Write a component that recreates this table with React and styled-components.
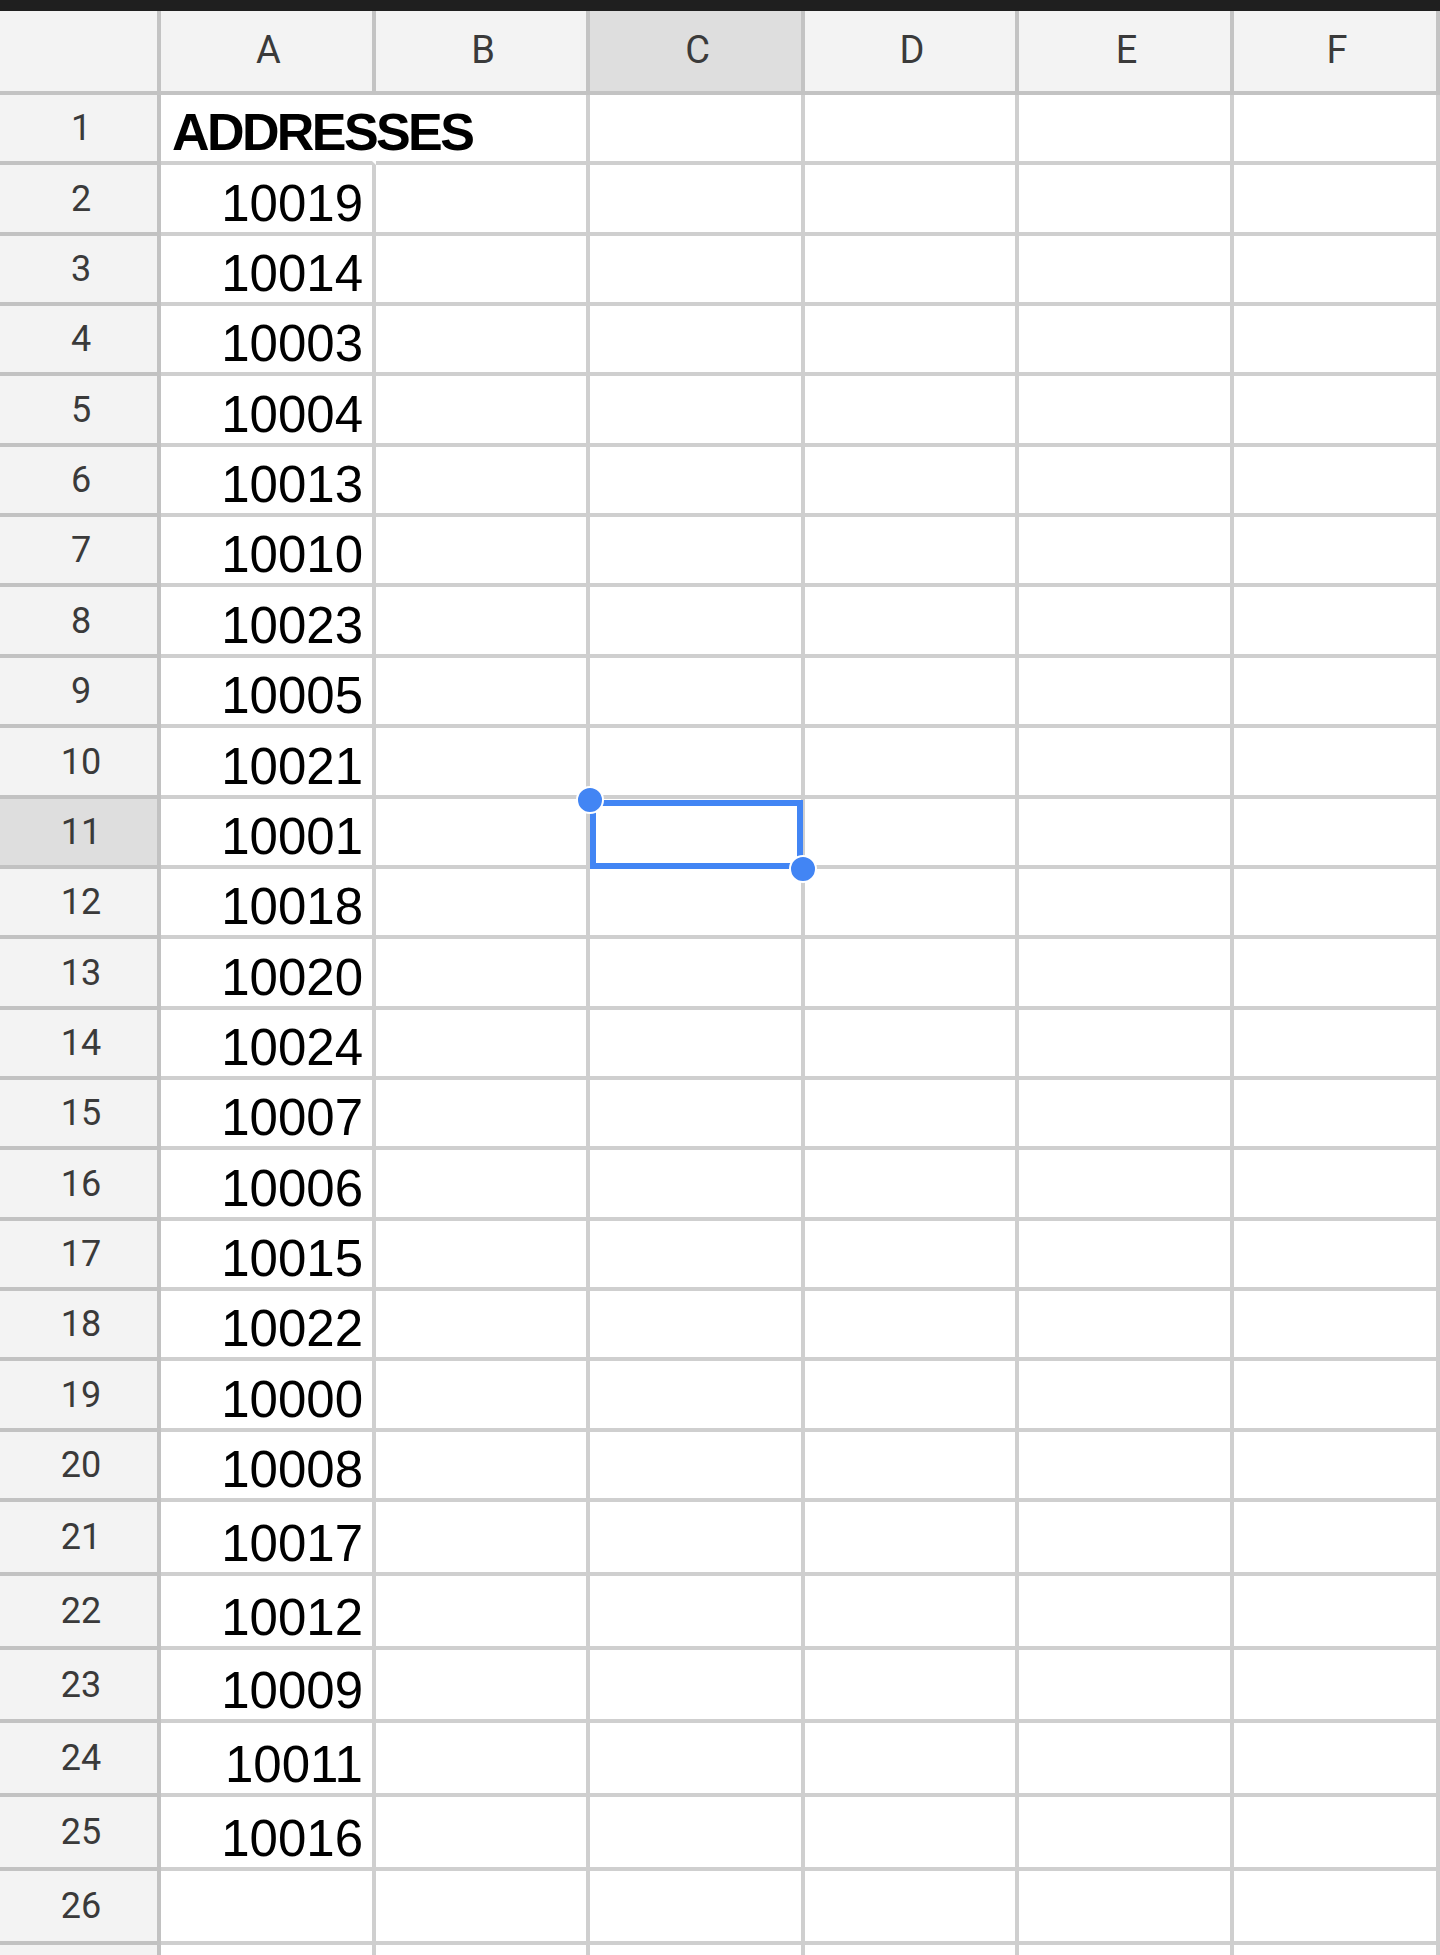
import React from "react";
import styled, { createGlobalStyle } from "styled-components";

const GlobalStyle = createGlobalStyle`
  * { box-sizing: border-box; }
  html, body { margin: 0; padding: 0; overflow: hidden; background: #fff; }
`;

const COLS = ["A", "B", "C", "D", "E", "F"];
const VALUES = [
  10019, 10014, 10003, 10004, 10013, 10010, 10023, 10005, 10021, 10001, 10018,
  10020, 10024, 10007, 10006, 10015, 10022, 10000, 10008, 10017, 10012, 10009,
  10011, 10016,
];
const SELECTED_COL = "C";
const SELECTED_ROW = 11;
const ROW_COUNT = 26;

// where each row's bottom gridline starts; rows past 20 are a bit taller
const lineTop = (n) => {
  if (n <= 20) return Math.round(91 + 70.35 * n);
  return Math.round(1498 + 73.83 * (n - 20));
};
const rowHeight = (n) => lineTop(n) - lineTop(n - 1);

const Sheet = styled.div`
  width: 1440px;
  height: 1955px;
  overflow: hidden;
  background: #fff;
`;

const TopBar = styled.div`
  height: 11px;
  background: #1f1f1f;
`;

const Row = styled.div`
  display: grid;
  grid-template-columns: 161px 215px 214px 215px 214px 215px 1fr;
  height: ${(p) => p.$h}px;
`;

const ColHeader = styled.div`
  display: flex;
  align-items: center;
  justify-content: center;
  padding: 0 0 2px 4px;
  background: ${(p) => (p.$active ? "#dedede" : "#f3f3f3")};
  border-right: 4px solid #c3c3c3;
  border-bottom: 4px solid #c3c3c3;
  font-family: Roboto, "Liberation Sans", sans-serif;
  font-size: 38px;
  color: #3a3a3a;
`;

const RowHeader = styled.div`
  display: flex;
  align-items: center;
  justify-content: center;
  padding-left: 5px;
  background: ${(p) => (p.$active ? "#dedede" : "#f3f3f3")};
  border-right: 4px solid #c2c2c2;
  border-bottom: 4px solid #c2c2c2;
  font-family: Roboto, "Liberation Sans", sans-serif;
  font-size: 36px;
  color: #3a3a3a;
`;

const Cell = styled.div`
  display: flex;
  align-items: flex-end;
  justify-content: ${(p) => (p.$left ? "flex-start" : "flex-end")};
  padding: 0 9px 3px 11px;
  border-right: 4px solid ${(p) => (p.$spill ? "#fff" : "#cfcfcf")};
  border-bottom: 4px solid #cfcfcf;
  font-family: "Liberation Sans", Arial, sans-serif;
  font-size: 51px;
  line-height: 1;
  color: #000;
  white-space: nowrap;
  position: ${(p) => (p.$selected ? "relative" : "static")};
`;

const Title = styled.span`
  font-size: 52px;
  font-weight: bold;
  letter-spacing: -2.6px;
`;

const Selection = styled.div`
  position: absolute;
  top: 1px;
  left: 0;
  width: 213px;
  height: 69px;
  border: 6px solid #4285f4;
`;

const Handle = styled.div`
  position: absolute;
  width: 28px;
  height: 28px;
  border-radius: 50%;
  background: #4285f4;
  border: 2px solid #fff;
  left: ${(p) => p.$x - 14}px;
  top: ${(p) => p.$y - 14}px;
`;

const SelectedCell = () => (
  <>
    <Selection />
    <Handle $x={0} $y={1} />
    <Handle $x={213} $y={70} />
  </>
);

const DataRow = ({ n }) => {
  const active = n === SELECTED_ROW;
  const value = n >= 2 ? VALUES[n - 2] : null;
  return (
    <Row $h={rowHeight(n)}>
      <RowHeader $active={active}>{n}</RowHeader>
      {COLS.map((c) => {
        if (c === "A" && n === 1)
          return (
            <Cell key={c} $left $spill>
              <Title>ADDRESSES</Title>
            </Cell>
          );
        const selected = active && c === SELECTED_COL;
        return (
          <Cell key={c} $selected={selected}>
            {c === "A" && value}
            {selected && <SelectedCell />}
          </Cell>
        );
      })}
    </Row>
  );
};

const App = () => {
  const rows = Array.from({ length: ROW_COUNT }, (_, i) => i + 1);
  return (
    <Sheet>
      <GlobalStyle />
      <TopBar />
      <Row $h={84}>
        <ColHeader />
        {COLS.map((c) => (
          <ColHeader key={c} $active={c === SELECTED_COL}>
            {c}
          </ColHeader>
        ))}
      </Row>
      {rows.map((n) => (
        <DataRow key={n} n={n} />
      ))}
      {/* next row peeks in at the bottom edge, its label is off-screen */}
      <Row $h={74}>
        <RowHeader />
        {COLS.map((c) => (
          <Cell key={c} />
        ))}
      </Row>
    </Sheet>
  );
};

export default App;
